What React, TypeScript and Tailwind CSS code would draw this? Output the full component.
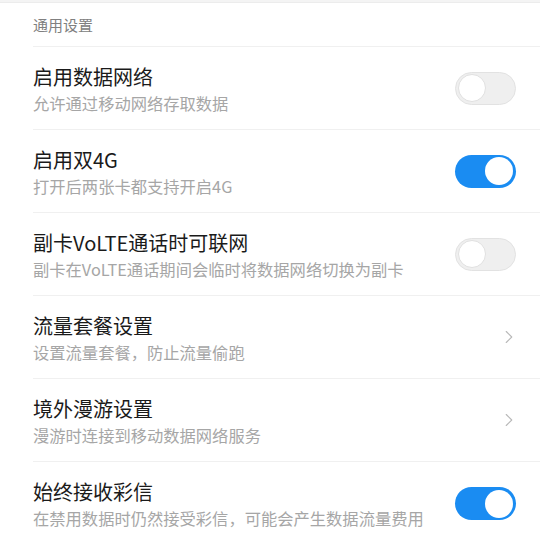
import { ChevronRight } from 'lucide-react';

type Row = {
  title: string;
  sub: string;
  kind: 'on' | 'off' | 'link';
};

const rows: Row[] = [
  { title: '启用数据网络', sub: '允许通过移动网络存取数据', kind: 'off' },
  { title: '启用双4G', sub: '打开后两张卡都支持开启4G', kind: 'on' },
  { title: '副卡VoLTE通话时可联网', sub: '副卡在VoLTE通话期间会临时将数据网络切换为副卡', kind: 'off' },
  { title: '流量套餐设置', sub: '设置流量套餐，防止流量偷跑', kind: 'link' },
  { title: '境外漫游设置', sub: '漫游时连接到移动数据网络服务', kind: 'link' },
  { title: '始终接收彩信', sub: '在禁用数据时仍然接受彩信，可能会产生数据流量费用', kind: 'on' },
];

function Toggle({ on }: { on: boolean }) {
  if (on) {
    return (
      <div className="w-[61px] h-[33px] rounded-full bg-[#1a8cf2] flex items-center justify-end px-[3px]">
        <div className="w-[28px] h-[28px] rounded-full bg-white" />
      </div>
    );
  }
  return (
    <div className="w-[61px] h-[33px] rounded-full bg-[#efefef] border border-[#e2e2e2] flex items-center px-[2px]">
      <div className="w-[28px] h-[28px] rounded-full bg-white border border-[#e0e0e0]" />
    </div>
  );
}

export default function App() {
  return (
    <div className="w-[540px] h-[544px] bg-white overflow-hidden font-['Noto_Sans_CJK_SC','Noto_Sans',sans-serif]">
      <div className="h-[3px] bg-[#f4f4f4] border-b border-[#ececec]" />
      <div className="pl-[33px]">
        <div className="h-[44px] flex items-center border-b border-[#f0f0f0]">
          <span className="text-[15px] leading-[22px] text-[#808080]">通用设置</span>
        </div>
        {rows.map((row, i) => (
          <div
            key={row.title}
            className={`h-[83px] flex items-center pr-[24px] ${i < rows.length - 1 ? 'border-b border-[#f0f0f0]' : ''}`}
          >
            <div className="flex-1 flex flex-col">
              <span className="text-[20px] leading-[29px] text-[#1a1a1a]">{row.title}</span>
              <span className="text-[16.3px] leading-[24px] text-[#a6a6a6]">{row.sub}</span>
            </div>
            {row.kind === 'link' ? (
              <ChevronRight size={22} strokeWidth={1.2} className="text-[#b8b8b8] mr-[-4px]" />
            ) : (
              <Toggle on={row.kind === 'on'} />
            )}
          </div>
        ))}
      </div>
    </div>
  );
}
